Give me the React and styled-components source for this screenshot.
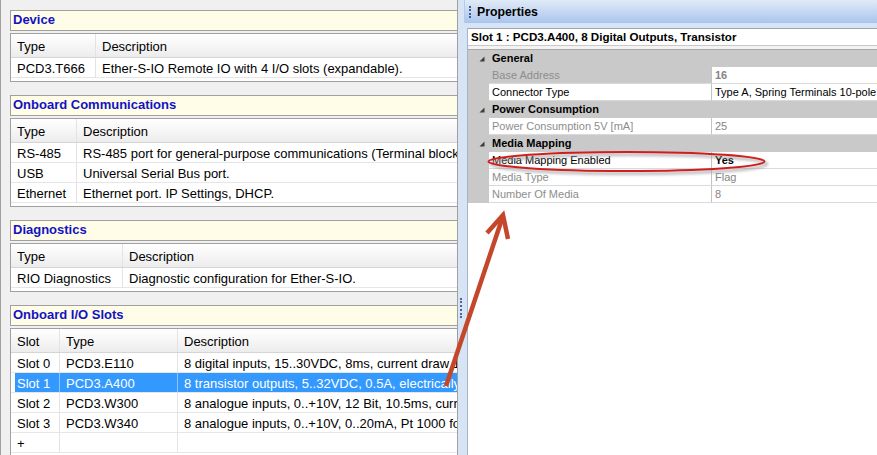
import React from "react";
import styled, { createGlobalStyle } from "styled-components";

const GlobalStyle = createGlobalStyle`
  html, body {
    margin: 0;
    padding: 0;
    background: #ffffff;
  }
  body {
    font-family: "Liberation Sans", Arial, sans-serif;
  }
`;

const Screen = styled.div`
  position: relative;
  display: flex;
  width: 877px;
  height: 455px;
  overflow: hidden;
`;

/* ---------- left: device overview ---------- */

const LeftPanel = styled.div`
  flex: none;
  width: 458px;
  box-sizing: border-box;
  border-left: 1px solid #a0a0a0;
  border-right: 1px solid #a0a0a0;
  background: #f0f0f0;
  overflow: hidden;
  padding: 10px 0 0 9px;
  display: flex;
  flex-direction: column;
  gap: 13px;
`;

const Section = styled.section`
  flex: none;
  width: 490px;
  display: flex;
  flex-direction: column;
  gap: 2px;
`;

const SectionTitle = styled.div`
  height: 21px;
  box-sizing: border-box;
  border: 1px solid #a0a0a0;
  background: #fffde7;
  padding-left: 2px;
  font-size: 13px;
  font-weight: bold;
  line-height: 18px;
  color: #1212c4;
`;

const Table = styled.div`
  border: 1px solid #a0a0a0;
  background: #ffffff;
  padding-bottom: 3px;
`;

const Row = styled.div`
  display: grid;
  grid-template-columns: ${(p) => p.$cols};
  height: ${(p) => (p.$head ? "24px" : "20px")};
  box-sizing: border-box;
  border-bottom: 1px solid ${(p) => (p.$head ? "#d5d5d5" : "#e6e6e6")};
  background: ${(p) =>
    p.$head
      ? "linear-gradient(#ffffff, #f6f6f6 50%, #ececec)"
      : p.$selected
      ? "linear-gradient(90deg, transparent 4px, #3399ff 4px)"
      : "transparent"};
  color: ${(p) => (p.$selected ? "#ffffff" : "#000000")};
`;

const Cell = styled.div`
  box-sizing: border-box;
  border-right: 1px solid ${(p) => (p.$selected ? "#8cc4ff" : "#e3e3e3")};
  padding: ${(p) => (p.$head ? "4px 0 0 6px" : "2px 0 0 6px")};
  font-size: 13px;
  line-height: 17px;
  white-space: nowrap;
  overflow: hidden;

  &:last-child {
    border-right: none;
    overflow: visible;
  }
`;

const sections = [
  {
    title: "Device",
    cols: "85px 1fr",
    head: ["Type", "Description"],
    rows: [["PCD3.T666", "Ether-S-IO Remote IO with 4 I/O slots (expandable)."]],
  },
  {
    title: "Onboard Communications",
    cols: "66px 1fr",
    head: ["Type", "Description"],
    rows: [
      ["RS-485", "RS-485 port for general-purpose communications (Terminal block X3)."],
      ["USB", "Universal Serial Bus port."],
      ["Ethernet", "Ethernet port. IP Settings, DHCP."],
    ],
  },
  {
    title: "Diagnostics",
    cols: "112px 1fr",
    head: ["Type", "Description"],
    rows: [["RIO Diagnostics", "Diagnostic configuration for Ether-S-IO."]],
  },
  {
    title: "Onboard I/O Slots",
    cols: "49px 118px 1fr",
    head: ["Slot", "Type", "Description"],
    selected: 1,
    rows: [
      ["Slot 0", "PCD3.E110", "8 digital inputs, 15..30VDC, 8ms, current draw 12mA"],
      ["Slot 1", "PCD3.A400", "8 transistor outputs, 5..32VDC, 0.5A, electrically isolated"],
      ["Slot 2", "PCD3.W300", "8 analogue inputs, 0..+10V, 12 Bit, 10.5ms, current"],
      ["Slot 3", "PCD3.W340", "8 analogue inputs, 0..+10V, 0..20mA, Pt 1000 for"],
      ["+", "", ""],
    ],
  },
];

/* ---------- splitter ---------- */

const Splitter = styled.div`
  flex: none;
  width: 6px;
  background: #d7e4f5;
  display: flex;
  flex-direction: column;
  align-items: center;
  padding-top: 298px;
  box-sizing: border-box;
`;

const Grip = styled.span`
  display: block;
  width: 0;
  height: 20px;
  border-left: 2px dotted #47679a;
`;

/* ---------- right: properties ---------- */

const RightPanel = styled.div`
  flex: 1;
  display: flex;
  flex-direction: column;
  background: #d7e4f5;
`;

const TitleBar = styled.div`
  flex: none;
  height: 23px;
  box-sizing: border-box;
  display: flex;
  align-items: center;
  gap: 6px;
  padding-left: 4px;
  background: linear-gradient(#e1ebf8, #c8daf2 45%, #a9c5ed);
  border-left: 1px solid #b7cbe8;
  font-size: 12.3px;
  font-weight: bold;
  color: #000000;
`;

const TitleGrip = styled.span`
  display: block;
  width: 0;
  height: 12px;
  border-left: 2px dotted #3f5f92;
`;

const Body = styled.div`
  flex: 1;
  margin: 5px 0 0 3px;
  border-left: 1px solid #a3b4cc;
  display: flex;
  flex-direction: column;
  background: #f3f3f3;
`;

const SlotBar = styled.div`
  flex: none;
  height: 18px;
  box-sizing: border-box;
  border-top: 1px solid #a4a4a4;
  border-bottom: 1px solid #c8c8c8;
  background: #ffffff;
  padding-left: 3px;
  font-size: 11.6px;
  font-weight: bold;
  line-height: 15px;
  white-space: nowrap;
`;

const PropGrid = styled.div`
  flex: none;
  margin-top: 3px;
  border-top: 1px solid #a8a8a8;
  display: grid;
  grid-template-columns: 21px 223px 1fr;
  grid-auto-rows: 17px;
  background: #c9c9c9;
  font-size: 11px;
`;

const Gutter = styled.div`
  display: flex;
  align-items: center;
  justify-content: flex-end;
  padding-right: 4px;
`;

const Category = styled.div`
  grid-column: span 2;
  padding-left: 3px;
  font-weight: bold;
  line-height: 17px;
  color: #000000;
`;

const Label = styled.div`
  box-sizing: border-box;
  border-right: 1px solid #c4c4c4;
  border-bottom: 1px solid #dadada;
  background: ${(p) => (p.$selected ? "#c9c9c9" : "#ffffff")};
  padding-left: 3px;
  line-height: 17px;
  white-space: nowrap;
  color: ${(p) => (p.$disabled ? "#8d8d8d" : "#000000")};
`;

const Value = styled.div`
  box-sizing: border-box;
  border-bottom: 1px solid #dadada;
  background: #ffffff;
  padding-left: 3px;
  line-height: 17px;
  white-space: nowrap;
  font-weight: ${(p) => (p.$bold ? "bold" : "normal")};
  color: ${(p) => (p.$disabled ? "#858585" : "#000000")};
`;

const Filler = styled.div`
  flex: 1;
  background: #ffffff;
`;

const properties = [
  { cat: "General" },
  { label: "Base Address", value: "16", disabled: true, bold: true, selected: true },
  { label: "Connector Type", value: "Type A, Spring Terminals 10-pole" },
  { cat: "Power Consumption" },
  { label: "Power Consumption 5V [mA]", value: "25", disabled: true },
  { cat: "Media Mapping" },
  { label: "Media Mapping Enabled", value: "Yes", bold: true },
  { label: "Media Type", value: "Flag", disabled: true },
  { label: "Number Of Media", value: "8", disabled: true },
];

const Expander = () => (
  <svg width="6" height="6" viewBox="0 0 6 6">
    <polygon points="5.5,0.5 5.5,5.5 0.5,5.5" fill="#3c3c3c" />
  </svg>
);

/* ---------- annotation overlay ---------- */

const Overlay = styled.svg`
  position: absolute;
  left: 0;
  top: 0;
  width: 877px;
  height: 455px;
  pointer-events: none;
`;

export default function App() {
  return (
    <>
      <GlobalStyle />
      <Screen>
        <LeftPanel>
          {sections.map((s) => (
            <Section key={s.title}>
              <SectionTitle>{s.title}</SectionTitle>
              <Table>
                <Row $head $cols={s.cols}>
                  {s.head.map((h) => (
                    <Cell $head key={h}>
                      {h}
                    </Cell>
                  ))}
                </Row>
                {s.rows.map((r, i) => (
                  <Row key={i} $cols={s.cols} $selected={s.selected === i}>
                    {r.map((c, j) => (
                      <Cell key={j} $selected={s.selected === i}>
                        {c}
                      </Cell>
                    ))}
                  </Row>
                ))}
              </Table>
            </Section>
          ))}
        </LeftPanel>

        <Splitter>
          <Grip />
        </Splitter>

        <RightPanel>
          <TitleBar>
            <TitleGrip />
            Properties
          </TitleBar>
          <Body>
            <SlotBar>Slot 1 : PCD3.A400, 8 Digital Outputs, Transistor</SlotBar>
            <PropGrid>
              {properties.map((p) =>
                p.cat ? (
                  <React.Fragment key={p.cat}>
                    <Gutter>
                      <Expander />
                    </Gutter>
                    <Category>{p.cat}</Category>
                  </React.Fragment>
                ) : (
                  <React.Fragment key={p.label}>
                    <Gutter />
                    <Label $disabled={p.disabled} $selected={p.selected}>
                      {p.label}
                    </Label>
                    <Value $disabled={p.disabled} $bold={p.bold}>
                      {p.value}
                    </Value>
                  </React.Fragment>
                )
              )}
            </PropGrid>
            <Filler />
          </Body>
        </RightPanel>

        <Overlay viewBox="0 0 877 455">
          <defs>
            <filter id="soft" x="-10%" y="-50%" width="120%" height="200%">
              <feGaussianBlur stdDeviation="1.6" />
            </filter>
          </defs>
          <ellipse cx="629" cy="164" rx="138" ry="9.5" fill="none" stroke="#9a9a9a" strokeWidth="2.5" filter="url(#soft)" opacity="0.8" />
          <ellipse cx="626.5" cy="161.5" rx="138" ry="9.5" fill="none" stroke="#d11d1d" strokeWidth="2" />
          <g stroke="#c4472c" strokeWidth="4.5" fill="none" strokeLinejoin="miter">
            <line x1="446" y1="386" x2="502" y2="219" />
            <polyline points="487,233 503,215 508,239" />
          </g>
        </Overlay>
      </Screen>
    </>
  );
}
